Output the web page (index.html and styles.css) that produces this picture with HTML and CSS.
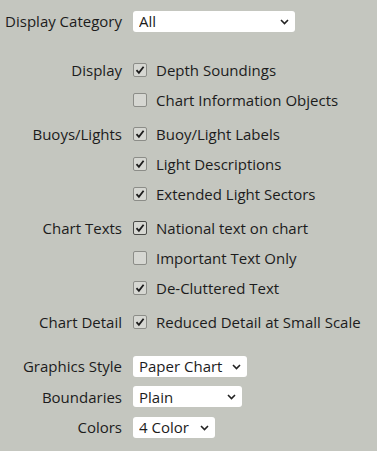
FILE: index.html
```html
<!DOCTYPE html>
<html lang="en">
<head>
  <meta charset="UTF-8">
  <meta name="viewport" content="width=device-width, initial-scale=1.0">
  <title>Vector Chart Display</title>
  <link rel="stylesheet" href="styles.css">
</head>
<body>
  <div class="panel">
    <div class="row top">
      <div class="label">Display Category</div>
      <div class="select wide">
        <select><option>All</option></select>
        <svg class="chev" width="9" height="6" viewBox="0 0 9 6"><path d="M1 1l3.5 3.5L8 1" fill="none" stroke="#222" stroke-width="1.6"/></svg>
      </div>
    </div>

    <div class="group first">
      <div class="row">
        <div class="label">Display</div>
        <label class="check"><input type="checkbox" checked><span class="box"><svg width="10" height="10" viewBox="0 0 10 10"><path d="M1.5 5.2l2.4 2.6L8.6 1.8" fill="none" stroke="#1c1c1c" stroke-width="1.8"/></svg></span>Depth Soundings</label>
      </div>
      <div class="row">
        <div class="label"></div>
        <label class="check"><input type="checkbox"><span class="box"></span>Chart Information Objects</label>
      </div>
    </div>

    <div class="group">
      <div class="row">
        <div class="label">Buoys/Lights</div>
        <label class="check"><input type="checkbox" checked><span class="box"><svg width="10" height="10" viewBox="0 0 10 10"><path d="M1.5 5.2l2.4 2.6L8.6 1.8" fill="none" stroke="#1c1c1c" stroke-width="1.8"/></svg></span>Buoy/Light Labels</label>
      </div>
      <div class="row">
        <div class="label"></div>
        <label class="check"><input type="checkbox" checked><span class="box"><svg width="10" height="10" viewBox="0 0 10 10"><path d="M1.5 5.2l2.4 2.6L8.6 1.8" fill="none" stroke="#1c1c1c" stroke-width="1.8"/></svg></span>Light Descriptions</label>
      </div>
      <div class="row">
        <div class="label"></div>
        <label class="check"><input type="checkbox" checked><span class="box"><svg width="10" height="10" viewBox="0 0 10 10"><path d="M1.5 5.2l2.4 2.6L8.6 1.8" fill="none" stroke="#1c1c1c" stroke-width="1.8"/></svg></span>Extended Light Sectors</label>
      </div>
    </div>

    <div class="group">
      <div class="row">
        <div class="label">Chart Texts</div>
        <label class="check"><input type="checkbox" checked><span class="box focus"><svg width="10" height="10" viewBox="0 0 10 10"><path d="M1.5 5.2l2.4 2.6L8.6 1.8" fill="none" stroke="#1c1c1c" stroke-width="1.8"/></svg></span>National text on chart</label>
      </div>
      <div class="row">
        <div class="label"></div>
        <label class="check"><input type="checkbox"><span class="box"></span>Important Text Only</label>
      </div>
      <div class="row">
        <div class="label"></div>
        <label class="check"><input type="checkbox" checked><span class="box"><svg width="10" height="10" viewBox="0 0 10 10"><path d="M1.5 5.2l2.4 2.6L8.6 1.8" fill="none" stroke="#1c1c1c" stroke-width="1.8"/></svg></span>De-Cluttered Text</label>
      </div>
    </div>

    <div class="group">
      <div class="row">
        <div class="label">Chart Detail</div>
        <label class="check"><input type="checkbox" checked><span class="box"><svg width="10" height="10" viewBox="0 0 10 10"><path d="M1.5 5.2l2.4 2.6L8.6 1.8" fill="none" stroke="#1c1c1c" stroke-width="1.8"/></svg></span>Reduced Detail at Small Scale</label>
      </div>
    </div>

    <div class="group bottom">
      <div class="row">
        <div class="label">Graphics Style</div>
        <div class="select paper">
          <select><option>Paper Chart</option></select>
          <svg class="chev" width="9" height="6" viewBox="0 0 9 6"><path d="M1 1l3.5 3.5L8 1" fill="none" stroke="#222" stroke-width="1.6"/></svg>
        </div>
      </div>
      <div class="row">
        <div class="label">Boundaries</div>
        <div class="select plain">
          <select><option>Plain</option></select>
          <svg class="chev" width="9" height="6" viewBox="0 0 9 6"><path d="M1 1l3.5 3.5L8 1" fill="none" stroke="#222" stroke-width="1.6"/></svg>
        </div>
      </div>
      <div class="row">
        <div class="label">Colors</div>
        <div class="select colors">
          <select><option>4 Color</option></select>
          <svg class="chev" width="9" height="6" viewBox="0 0 9 6"><path d="M1 1l3.5 3.5L8 1" fill="none" stroke="#222" stroke-width="1.6"/></svg>
        </div>
      </div>
    </div>
  </div>
</body>
</html>
```

FILE: styles.css
```css
body {
  margin: 0;
  background-color: #c4c6bf;
  color: #1c1c1c;
  font-family: "Open Sans", "DejaVu Sans", sans-serif;
  font-size: 15px;
}
.panel {
  padding-top: 6px;
}
.row {
  display: grid;
  grid-template-columns: 122px 1fr;
  column-gap: 11px;
  align-items: center;
  height: 30px;
}
.label {
  text-align: right;
  white-space: nowrap;
}
.group {
  margin-bottom: 4px;
}
.group.first {
  margin-top: 19px;
}
.group.bottom {
  margin-top: 14px;
}
.group.bottom .row {
  height: 30.5px;
}
.check {
  display: flex;
  align-items: center;
  gap: 9px;
  white-space: nowrap;
}
.check input {
  display: none;
}
.box {
  width: 12px;
  height: 12px;
  border: 1px solid #8c8d88;
  border-radius: 2px;
  background-color: #d6d7d2;
  display: flex;
  align-items: center;
  justify-content: center;
}
.box.focus {
  border-color: #4a4b48;
}
.select {
  position: relative;
  height: 21px;
}
.select select {
  appearance: none;
  -webkit-appearance: none;
  width: 100%;
  height: 21px;
  border: none;
  border-radius: 3px;
  background-color: #fff;
  color: #1c1c1c;
  font-family: inherit;
  font-size: 15px;
  padding: 0 0 0 6px;
  outline: none;
}
.chev {
  position: absolute;
  right: 6px;
  top: 8px;
}
.select.wide { width: 162px; }
.select.paper { width: 114px; }
.select.plain { width: 109px; }
.select.colors { width: 82px; }
```
